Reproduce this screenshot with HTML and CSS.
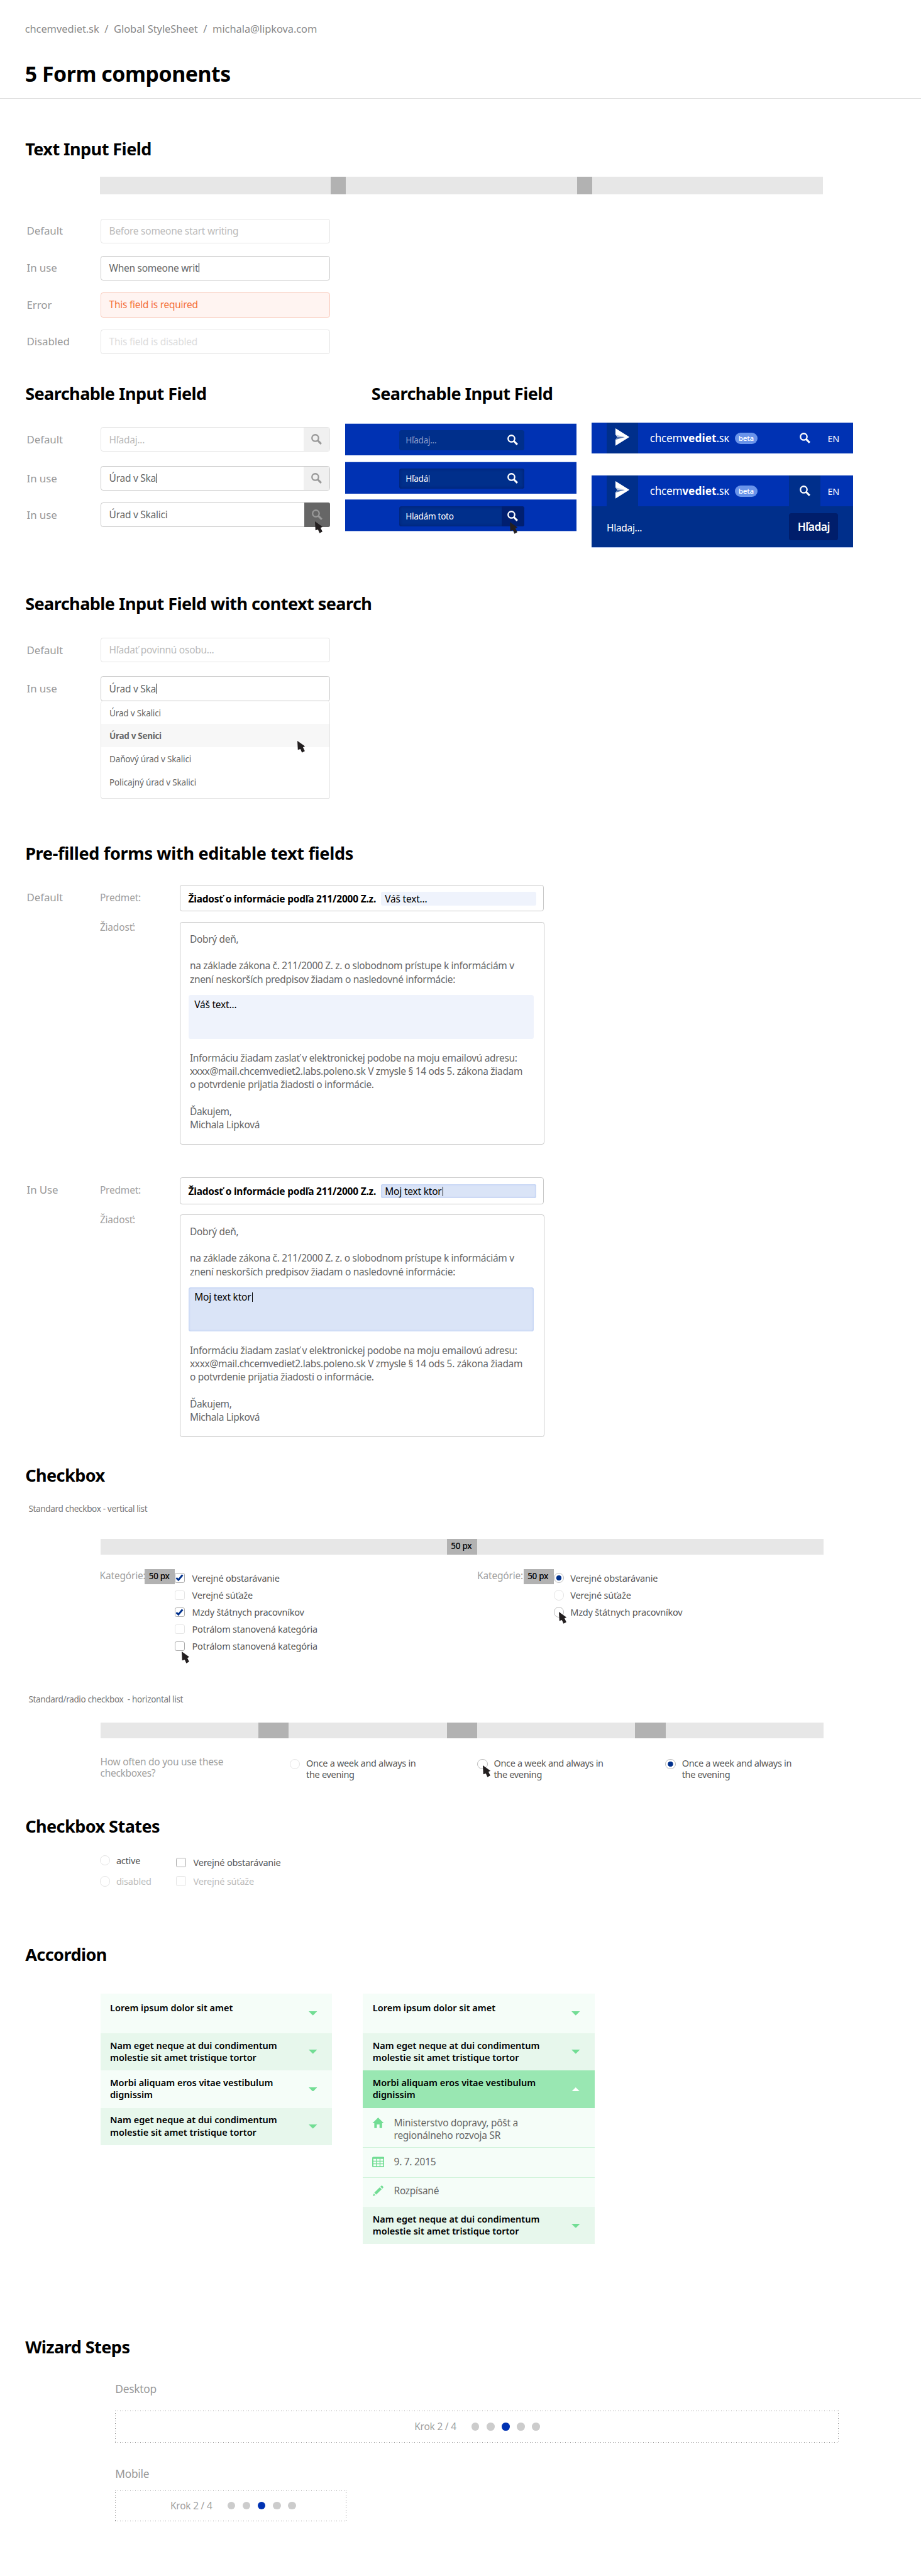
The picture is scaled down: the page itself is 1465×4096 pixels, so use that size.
FILE: index.html
```html
<!DOCTYPE html>
<html lang="sk">
<head>
<meta charset="utf-8">
<title>5 Form components</title>
<link rel="stylesheet" href="styles.css">
</head>
<body>
<svg class="sprite" aria-hidden="true">
  <symbol id="search" viewBox="0 0 18 18"><circle cx="6.7" cy="6.7" r="5.4" fill="none" stroke="currentColor" stroke-width="2.4"/><path d="M10.6 10.6L16.4 16.4" stroke="currentColor" stroke-width="3.2"/></symbol>
  <symbol id="cursor" viewBox="0 0 13 20"><path d="M0 0L12.6 9L9.3 10.6L12.3 16.8L7.6 19.4L5 13.4L.8 14.8z" fill="#231f20"/></symbol>
  <symbol id="plane" viewBox="0 0 23 29"><path d="M0 0L23 14.4L0 28.7z" fill="#fff"/><path d="M0 10.4L3.2 14.4L0 18.8z" fill="#002f8b"/><path d="M0 10.4L15.4 14.4H3.2z" fill="#b9c6de"/><path d="M3.2 14.4H15.4L0 18.8z" fill="#5677b3"/></symbol>
  <symbol id="tick" viewBox="0 0 16 16"><path d="M2.6 8.2L6 11.6L12.8 3.4" fill="none" stroke="#00308c" stroke-width="3"/></symbol>
  <symbol id="house" viewBox="0 0 19 18"><path d="M9.3 0L18.6 9.2H15.8V17.4H11.6V11.4H7.2V17.4H3V9.2H0z" fill="currentColor"/></symbol>
  <symbol id="calendar" viewBox="0 0 20 17"><rect width="20" height="17" rx="1.8" fill="currentColor"/><path d="M2 3.4h4.4v3H2zm5.8 0h4.4v3H7.8zm5.8 0H18v3h-4.4zM2 7.8h4.4v3H2zm5.8 0h4.4v3H7.8zm5.8 0H18v3h-4.4zM2 12.2h4.4v3H2zm5.8 0h4.4v3H7.8zm5.8 0H18v3h-4.4z" fill="#f5fdf8"/></symbol>
  <symbol id="pencil" viewBox="0 0 18 18"><path d="M0 17.6L1.6 13.2L4.5 16zM2.5 11.9L11.4 3L14.7 6.2L5.7 15.1zM12.4 2.1L14 .5Q14.8 -.1 15.6 .6L17.2 2.2Q17.9 3 17.2 3.7L15.7 5.2z" fill="currentColor"/></symbol>
  <symbol id="down" viewBox="0 0 14 7"><path d="M0 0H14L7 7z" fill="#72dd94"/></symbol>
  <symbol id="up" viewBox="0 0 14 7"><path d="M7 0L14 7H0z" fill="#fff"/></symbol>
</svg>

<header class="head">
  <p class="crumbs"><span>chcemvediet.sk</span><span>/</span><span>Global StyleSheet</span><span>/</span><span>michala@lipkova.com</span></p>
  <h1>5 Form components</h1>
</header>

<main>
<section class="s-text">
  <h2>Text Input Field</h2>
  <div class="ruler ruler-3"><i></i><i></i></div>
  <div class="rows">
    <div class="row"><span class="label">Default</span><div class="field idle">Before someone start writing</div></div>
    <div class="row"><span class="label">In use</span><div class="field">When someone writ<b class="caret"></b></div></div>
    <div class="row"><span class="label">Error</span><div class="field error">This field is required</div></div>
    <div class="row"><span class="label">Disabled</span><div class="field disabled">This field is disabled</div></div>
  </div>
</section>

<section class="s-search">
  <div class="col-light">
    <h2>Searchable Input Field</h2>
    <div class="row r1"><span class="label">Default</span><div class="field idle">Hľadaj...<span class="go"><svg><use href="#search"/></svg></span></div></div>
    <div class="row r2"><span class="label">In use</span><div class="field">Úrad v Ska<b class="caret"></b><span class="go"><svg><use href="#search"/></svg></span></div></div>
    <div class="row r3"><span class="label">In use</span><div class="field">Úrad v Skalici<span class="go hover"><svg><use href="#search"/></svg><svg class="cursor c-go"><use href="#cursor"/></svg></span></div></div>
  </div>
  <div class="col-blue">
    <h2>Searchable Input Field</h2>
    <div class="band"><div class="dark-field"><span class="dim">Hľadaj...</span><span class="go2"><svg><use href="#search"/></svg></span></div></div>
    <div class="band"><div class="dark-field inset">Hľadá<b class="caret thin"></b><span class="go2"><svg><use href="#search"/></svg></span></div></div>
    <div class="band last"><div class="dark-field inset">Hladám toto<span class="go2 hover"><svg><use href="#search"/></svg><svg class="cursor c-go2"><use href="#cursor"/></svg></span></div></div>
  </div>
  <div class="col-nav">
    <div class="nav">
      <span class="mark"><svg><use href="#plane"/></svg></span>
      <span class="brand">chcem<b>vediet</b>.<small>SK</small></span><span class="beta">beta</span>
      <span class="find"><svg><use href="#search"/></svg></span><span class="lang">EN</span>
    </div>
    <div class="nav open">
      <span class="mark"><svg><use href="#plane"/></svg></span>
      <span class="brand">chcem<b>vediet</b>.<small>SK</small></span><span class="beta">beta</span>
      <span class="find on"><svg><use href="#search"/></svg></span><span class="lang">EN</span>
    </div>
    <div class="nav-search"><span>Hladaj...</span><span class="submit">Hľadaj</span></div>
  </div>
</section>

<section class="s-context">
  <h2>Searchable Input Field with context search</h2>
  <div class="row c1"><span class="label">Default</span><div class="field idle">Hľadať povinnú osobu...</div></div>
  <div class="row c2"><span class="label">In use</span><div class="field">Úrad v Ska<b class="caret"></b></div></div>
  <ul class="menu">
    <li>Úrad v Skalici</li>
    <li class="active">Úrad v Senici<svg class="cursor c-menu"><use href="#cursor"/></svg></li>
    <li>Daňový úrad v Skalici</li>
    <li>Policajný úrad v Skalici</li>
  </ul>
</section>

<section class="s-forms">
  <h2 class="wide">Pre-filled forms with editable text fields</h2>
  <div class="form">
    <span class="label">Default</span>
    <span class="flabel">Predmet:</span>
    <div class="subject"><strong>Žiadosť o informácie podľa 211/2000 Z.z.</strong><span class="chip">Váš text...</span></div>
    <span class="flabel body-label">Žiadosť:</span>
    <div class="letter">
      <p>Dobrý deň,</p><br>
      <p>na základe zákona č. 211/2000 Z. z. o slobodnom prístupe k informáciám v<br>znení neskorších predpisov žiadam o nasledovné informácie:</p>
      <div class="area">Váš text...</div>
      <p>Informáciu žiadam zaslať v elektronickej podobe na moju emailovú adresu:<br>xxxx@mail.chcemvediet2.labs.poleno.sk V zmysle § 14 ods 5. zákona žiadam<br>o potvrdenie prijatia žiadosti o informácie.</p><br>
      <p>Ďakujem,<br>Michala Lipková</p>
    </div>
  </div>
  <div class="form using">
    <span class="label">In Use</span>
    <span class="flabel">Predmet:</span>
    <div class="subject"><strong>Žiadosť o informácie podľa 211/2000 Z.z.</strong><span class="chip">Moj text ktor<b class="caret"></b></span></div>
    <span class="flabel body-label">Žiadosť:</span>
    <div class="letter">
      <p>Dobrý deň,</p><br>
      <p>na základe zákona č. 211/2000 Z. z. o slobodnom prístupe k informáciám v<br>znení neskorších predpisov žiadam o nasledovné informácie:</p>
      <div class="area">Moj text ktor<b class="caret"></b></div>
      <p>Informáciu žiadam zaslať v elektronickej podobe na moju emailovú adresu:<br>xxxx@mail.chcemvediet2.labs.poleno.sk V zmysle § 14 ods 5. zákona žiadam<br>o potvrdenie prijatia žiadosti o informácie.</p><br>
      <p>Ďakujem,<br>Michala Lipková</p>
    </div>
  </div>
</section>

<section class="s-check">
  <h2>Checkbox</h2>
  <p class="caption">Standard checkbox - vertical list</p>
  <div class="ruler ruler-mid"><i>50 px</i></div>
  <div class="groups">
    <div class="group">
      <span class="flabel">Kategórie:</span><i class="gap">50 px</i>
      <ul class="options">
        <li><span class="check on"><svg><use href="#tick"/></svg></span>Verejné obstarávanie</li>
        <li><span class="check"></span>Verejné súťaže</li>
        <li><span class="check on"><svg><use href="#tick"/></svg></span>Mzdy štátnych pracovníkov</li>
        <li><span class="check"></span>Potrálom stanovená kategória</li>
        <li><span class="check on"><svg class="cursor c-check"><use href="#cursor"/></svg></span>Potrálom stanovená kategória</li>
      </ul>
    </div>
    <div class="group second">
      <span class="flabel">Kategórie:</span><i class="gap">50 px</i>
      <ul class="options">
        <li><span class="radio on picked"></span>Verejné obstarávanie</li>
        <li><span class="radio"></span>Verejné súťaže</li>
        <li><span class="radio on"><svg class="cursor c-radio"><use href="#cursor"/></svg></span>Mzdy štátnych pracovníkov</li>
      </ul>
    </div>
  </div>
  <p class="caption">Standard/radio checkbox&nbsp; - horizontal list</p>
  <div class="ruler ruler-4"><i></i><i></i><i></i></div>
  <div class="across">
    <p class="question">How often do you use these<br>checkboxes?</p>
    <div class="choice first"><span class="radio"></span><p>Once a week and always in<br>the evening</p></div>
    <div class="choice"><span class="radio on"><svg class="cursor c-choice"><use href="#cursor"/></svg></span><p>Once a week and always in<br>the evening</p></div>
    <div class="choice"><span class="radio on picked"></span><p>Once a week and always in<br>the evening</p></div>
  </div>
</section>

<section class="s-states">
  <h2>Checkbox States</h2>
  <div class="states">
    <ul class="state-radios"><li><span class="radio"></span>active</li><li class="off"><span class="radio"></span>disabled</li></ul>
    <ul class="state-checks"><li><span class="check on"></span>Verejné obstarávanie</li><li class="off"><span class="check"></span>Verejné súťaže</li></ul>
  </div>
</section>

<section class="s-accordion">
  <h2>Accordion</h2>
  <div class="panels">
    <div class="panel">
      <div class="item tall">Lorem ipsum dolor sit amet<svg><use href="#down"/></svg></div>
      <div class="item alt">Nam eget neque at dui condimentum<br>molestie sit amet tristique tortor<svg><use href="#down"/></svg></div>
      <div class="item">Morbi aliquam eros vitae vestibulum<br>dignissim<svg><use href="#down"/></svg></div>
      <div class="item alt">Nam eget neque at dui condimentum<br>molestie sit amet tristique tortor<svg><use href="#down"/></svg></div>
    </div>
    <div class="panel">
      <div class="item tall">Lorem ipsum dolor sit amet<svg><use href="#down"/></svg></div>
      <div class="item alt">Nam eget neque at dui condimentum<br>molestie sit amet tristique tortor<svg><use href="#down"/></svg></div>
      <div class="item opened">Morbi aliquam eros vitae vestibulum<br>dignissim<svg><use href="#up"/></svg></div>
      <div class="detail ministry"><svg><use href="#house"/></svg><p>Ministerstvo dopravy, pôšt a<br>regionálneho rozvoja SR</p></div>
      <div class="detail"><svg><use href="#calendar"/></svg><p>9. 7. 2015</p></div>
      <div class="detail end"><svg><use href="#pencil"/></svg><p>Rozpísané</p></div>
      <div class="item alt">Nam eget neque at dui condimentum<br>molestie sit amet tristique tortor<svg><use href="#down"/></svg></div>
    </div>
  </div>
</section>

<section class="s-wizard">
  <h2>Wizard Steps</h2>
  <p class="device">Desktop</p>
  <div class="steps desktop"><span>Krok 2 / 4</span><div class="dots"><i></i><i></i><i class="now"></i><i></i><i></i></div></div>
  <p class="device mob">Mobile</p>
  <div class="steps mobile"><span>Krok 2 / 4</span><div class="dots"><i></i><i></i><i class="now"></i><i></i><i></i></div></div>
</section>
</main>
</body>
</html>
```
FILE: styles.css
```css
*{box-sizing:border-box;margin:0;padding:0}
html{font-size:9.67px;background:#fff}
body{font-family:"Noto Sans","Open Sans",sans-serif;height:4096px;overflow:hidden;color:#555;font-size:1.6rem}
ul{list-style:none}
i{font-style:normal}
svg{display:block;flex:none}
.sprite{position:absolute;width:0;height:0}

.head{height:16.25rem;padding:3.74rem 0 0 4.1rem;border-bottom:1px solid #ddd}
.crumbs{display:flex;gap:.9rem;font-size:1.7rem;line-height:2rem;color:#888;margin-bottom:4.35rem;letter-spacing:-.005rem}
h1{font-size:3.5rem;line-height:4rem;letter-spacing:-.046rem;color:#000}
h2{height:3.4rem;padding:.1rem 0 0 4.15rem;font-size:2.8rem;line-height:3.4rem;letter-spacing:-.058rem;color:#000;white-space:nowrap}
h2.wide{letter-spacing:-.033rem}
main{padding-top:6.51rem}

.s-text{height:40.2rem}
.s-search{height:34.58rem;display:flex}
.s-context{height:41.04rem}
.s-forms{height:102.3rem}
.s-check{height:57.66rem}
.s-states{height:21.13rem}
.s-accordion{height:64.57rem}

.ruler{display:flex;margin-left:16.5rem;width:119rem;height:2.5rem;background:#e7e7e7}
.ruler i{background:#b2b2b2}
.ruler-3{height:2.9rem;margin:2.94rem 0 4rem 16.4rem}
.ruler-3 i{width:2.5rem;margin-left:38rem}
.ruler-4 i{width:5rem;margin-left:26rem}
.ruler-mid i,.gap{width:5rem;height:2.5rem;flex:none;font-size:1.4rem;line-height:2.4rem;letter-spacing:-.03rem;font-weight:500;color:#000;padding-left:.68rem}
.ruler-mid i{margin-left:57rem}

.rows{display:flex;flex-direction:column;gap:2.02rem}
.row{display:flex;align-items:center;padding-left:4.4rem;height:4.05rem}
.label{width:12.1rem;font-size:1.75rem;letter-spacing:-.01rem;color:#999;line-height:2.2rem}
.field{position:relative;display:flex;align-items:center;width:37.8rem;height:100%;border:1px solid #c8c8c8;border-radius:.4rem;padding-left:1.35rem;color:#666;letter-spacing:-.026rem;white-space:pre}
.s-text .field{padding-bottom:.12rem}
.s-text .label{margin-top:-.15rem}
.idle{border-color:#e4e4e4;color:#bbb}
.error{border-color:#f9c9ba;background:#fff4f1;color:#f4713c}
.disabled{border-color:#e4e4e4;color:#ddd}
.caret{display:inline-block;width:1px;height:1.6rem;background:#000;margin-left:.12rem;vertical-align:-.25rem}
.caret.thin{height:1.3rem;background:#fff}
.go{margin-left:auto;position:relative;align-self:stretch;width:4.2rem;background:#f0f0f0;color:#999;border-radius:0 .3rem .3rem 0;display:grid;place-items:center}
.s-search .field{padding-bottom:0}
.go>svg:first-child,.go2>svg:first-child,.find svg{width:1.8rem;height:1.8rem}
.go.hover{background:#666;margin:-1px -1px -1px auto}
.cursor{position:absolute;z-index:2;width:1.3rem;height:2rem}
.c-go{left:1.75rem;top:3.15rem}
.r1{margin-top:3.89rem}
.r2{margin-top:2.3rem}
.r3{margin-top:1.95rem}

.col-light{width:56.8rem;flex:none}
.col-blue{width:38rem;flex:none}
.col-nav{width:43rem;margin-left:2.5rem;padding-top:6.54rem;color:#fff}
.col-blue h2{padding-left:4.3rem;margin-bottom:3.24rem}
.band{height:5.3rem;margin-bottom:1rem;background:#0032b3;border-top:1px solid #b4c5ec;padding:1.06rem 0 0 8.84rem}
.band+.band{margin-bottom:.9rem}
.band.last{border-color:#3f66c8;border-bottom:1px solid #90a8e2}
.dark-field{position:relative;display:flex;align-items:center;width:20.56rem;height:3.25rem;border-radius:.4rem;background:#002f8b;color:#fff;font-size:1.4rem;letter-spacing:-.028rem;padding-left:1.1rem}
.dark-field.inset{box-shadow:inset 0 0 .5rem rgba(0,18,90,.6)}
.dim{color:#8c9fcb}
.go2{margin-left:auto;position:relative;width:3.7rem;align-self:stretch;display:grid;place-items:center;border-radius:0 .4rem .4rem 0}
.go2.hover{background:#001f70}
.c-go2{left:1.4rem;top:2.6rem}
.nav{position:relative;display:flex;align-items:center;height:5.1rem;background:#0032b3;padding-left:2.5rem;margin-bottom:3.6rem}
.nav.open{margin-bottom:0}
.mark,.find{width:5.2rem;align-self:stretch;display:grid;place-items:center}
.mark{background:#002f8b}
.mark svg{width:2.3rem;height:2.9rem;margin-top:-.3rem}
.brand{width:14rem;margin-left:1.9rem;font-size:1.78rem;letter-spacing:-.03rem;white-space:nowrap}
.brand b{letter-spacing:.01rem}
.brand small{font-size:1.4rem;font-weight:500;letter-spacing:.02rem}
.beta{width:3.7rem;height:1.87rem;border-radius:1rem;background:#6a94ea;font-size:1.2rem;font-weight:500;line-height:1.8rem;letter-spacing:-.02rem;text-align:center}
.find{margin-left:5.2rem}
.find.on{background:#002f8b}
.lang{margin-left:1.15rem;font-size:1.5rem;letter-spacing:-.02rem;padding-top:.1rem}
.nav-search{height:6.73rem;background:#002f8b;border-bottom:1px solid #b4c5ec;display:flex;justify-content:space-between;align-items:center;padding:0 2.4rem 0 2.5rem;letter-spacing:-.03rem}
.nav-search span:first-child{padding-top:.4rem}
.submit{width:8.1rem;height:4.5rem;border-radius:.4rem;background:#001e6b;font-size:1.8rem;font-weight:600;line-height:4.4rem;letter-spacing:-.05rem;text-align:center}

.c1{margin-top:3.89rem}
.c2{margin-top:2.34rem}
.menu{margin-left:16.5rem;width:37.8rem;height:16.05rem;border:1px solid #e4e4e4;border-top:0;border-radius:.4rem;font-size:1.4rem;letter-spacing:-.018rem;color:#666}
.menu li{position:relative;height:3.8rem;line-height:3.95rem;padding-left:1.4rem}
.menu .active{background:#f7f7f7;font-weight:700;letter-spacing:-.032rem}
.c-menu{left:32.3rem;top:2.75rem}

.form{display:grid;grid-template-columns:12.03rem 13.14rem 60rem;grid-template-rows:4.4rem 36.54rem;row-gap:1.74rem;padding-left:4.4rem;margin-top:3.52rem}
.form .label{padding-top:.98rem}
.flabel{color:#a0a0a0;letter-spacing:-.018rem;line-height:2.2rem;white-space:nowrap}
.form .flabel{padding-top:1.03rem}
.form .body-label{grid-column:2;padding-top:0;margin-top:-.2rem}
.form.using{margin-top:5.42rem}
.subject{width:59.85rem;border:1px solid #c8c8c8;border-radius:.4rem;display:flex;align-items:center;justify-content:space-between;padding:.12rem 1.1rem 0 1.3rem;color:#000}
.subject strong{letter-spacing:-.021rem;white-space:nowrap}
.chip{width:25.5rem;height:2.3rem;line-height:2.4rem;border-radius:.3rem;background:#eff3fc;padding-left:.6rem;letter-spacing:-.02rem}
.using .chip,.using .area{background:#dae4f7;box-shadow:inset 0 0 .35rem #a9c0f2}
.letter{width:59.95rem;border:1px solid #c8c8c8;border-radius:.4rem;padding:1.6rem 0 0 1.55rem;color:#666;line-height:2.2rem;letter-spacing:-.032rem;white-space:nowrap}
.area{width:56.8rem;height:7.3rem;margin:1.44rem 0 1.99rem -.25rem;padding:.52rem 1rem;border-radius:.4rem;background:#eff3fc;color:#000;letter-spacing:-.02rem}

.caption{padding:.08rem 0 0 4.7rem;height:1.8rem;font-size:1.4rem;line-height:1.8rem;letter-spacing:-.035rem;color:#777}
.s-check h2{margin-bottom:2.95rem}
.ruler-mid{margin-top:4.07rem;margin-bottom:2.4rem}
.groups{display:flex;height:20.49rem;padding-left:16.4rem}
.group{display:flex;width:62.1rem;align-items:flex-start}
.group .flabel{width:7.4rem}
.group.second .flabel{width:7.6rem}
.gap{position:relative;background:#b2b2b2}
.options{padding-top:.1rem}
.options li,.states li{display:flex;align-items:center;height:2.8rem;font-size:1.5rem;letter-spacing:-.022rem;color:#555}
.check{position:relative;width:1.6rem;height:1.6rem;border:1px solid #e4e4e4;border-radius:.3rem;margin-right:1.2rem;flex:none;background:#fff}
.check.on{border-color:#aaa}
.check svg:not(.cursor){width:1.6rem;height:1.6rem;margin:-1px}
.radio{position:relative;width:1.7rem;height:1.7rem;border:1px solid #e4e4e4;border-radius:50%;margin-right:1.02rem;flex:none;background:#fff}
.radio.on{border-color:#bbb}
.picked{background:radial-gradient(circle,#00308c .4rem,#fff .47rem)}
.c-check{left:1rem;top:1.62rem}
.c-radio{left:.75rem;top:.68rem}
.c-choice{left:.85rem;top:1rem}
.ruler-4{margin-top:3.01rem;margin-bottom:2.9rem}
.across{display:flex;padding-left:16.5rem}
.question{width:31.15rem;color:#a0a0a0;line-height:1.93rem;letter-spacing:-.028rem}
.choice{display:flex;width:30.95rem;padding-top:.4rem;font-size:1.5rem;line-height:1.83rem;letter-spacing:-.033rem;color:#555}
.choice.first{width:30.85rem}
.choice .radio{margin-top:.12rem}

.states{display:flex;padding:2.27rem 0 0 16.4rem}
.state-radios{width:12.6rem}
.state-radios li{height:3.44rem}
.state-checks{padding-top:.5rem}
.state-checks li{height:3.07rem}
.states .off{color:#bbb}

.panels{display:flex;gap:5.1rem;align-items:flex-start;margin:4.73rem 0 0 16.5rem}
.panel{width:38.1rem}
.item{position:relative;display:flow-root;height:6.15rem;padding:1.03rem 0 0 1.6rem;background:#f5fdf8;color:#000;font-size:1.5rem;font-weight:600;line-height:2rem;letter-spacing:.001rem}
.item svg{position:absolute;right:2.4rem;top:2.75rem;width:1.4rem;height:.7rem}
.tall{height:6.5rem;padding-top:1.33rem}
.tall svg{top:2.95rem}
.alt{background:#e7f7ec}
.opened{background:#99e7b2}
.detail{display:flex;height:4.89rem;padding:1.3rem 0 0 1.5rem;border-bottom:1px solid #cdf2d8;background:#f5fdf8;color:#666;line-height:2rem;letter-spacing:-.028rem}
.detail svg{width:2rem;height:1.8rem;color:#72dd94;margin:.1rem 1.6rem 0 0}
.ministry{height:6.6rem;padding-top:1.53rem}
.end{height:4.8rem;padding-top:1.17rem;border:0}

.device{margin:4.06rem 0 2.5rem 18.95rem;font-size:1.8rem;line-height:2.2rem;letter-spacing:-.03rem;color:#999}
.mob{margin-top:4.07rem;margin-bottom:1.5rem}
.steps{display:flex;align-items:center;justify-content:center;gap:2.48rem;margin-left:18.95rem;width:119rem;height:5.23rem;color:#a0a0a0;letter-spacing:-.022rem;
  background:
    repeating-linear-gradient(90deg,#888 0 1px,transparent 1px 4px) top/100% 1px no-repeat,
    repeating-linear-gradient(90deg,#888 0 1px,transparent 1px 4px) bottom/100% 1px no-repeat,
    repeating-linear-gradient(#888 0 1px,transparent 1px 4px) left/1px 100% no-repeat,
    repeating-linear-gradient(#888 0 1px,transparent 1px 4px) right/1px 100% no-repeat}
.desktop{padding-left:.1rem}
.mobile{width:38rem;padding-left:.8rem}
.dots{display:flex;gap:1.2rem}
.dots i{width:1.3rem;height:1.3rem;border-radius:50%;background:#ccc}
.dots .now{background:#0032b3}
```
